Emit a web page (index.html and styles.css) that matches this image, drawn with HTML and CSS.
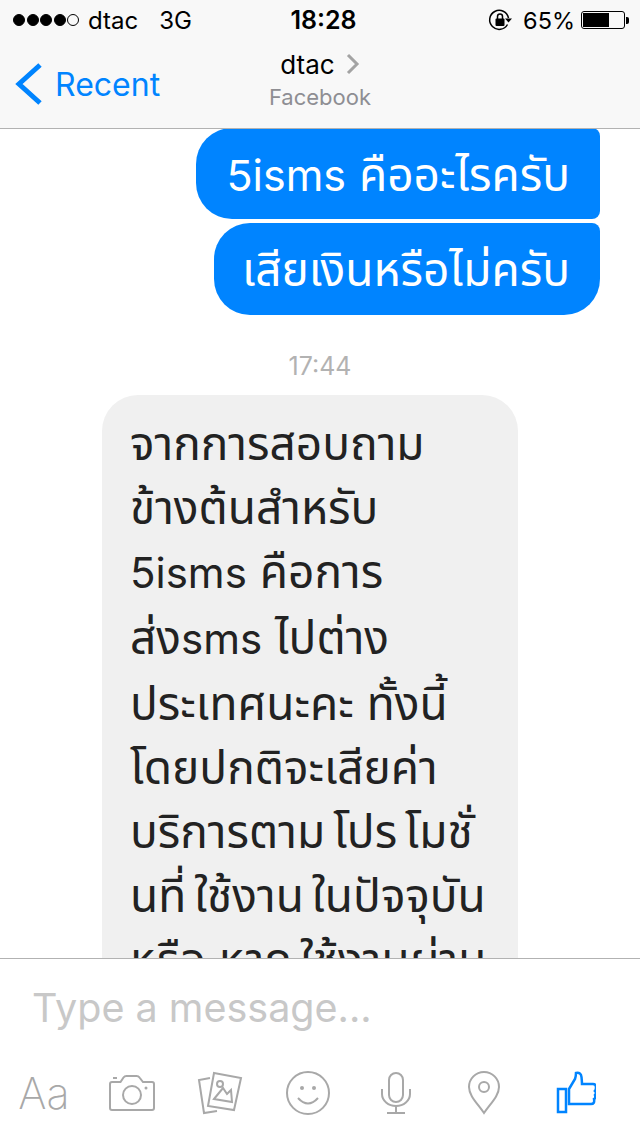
FILE: index.html
```html
<!DOCTYPE html>
<html lang="en">
<head>
    <meta charset="UTF-8">
    <meta name="viewport" content="width=device-width, initial-scale=1.0">
    <title>dtac - Messenger</title>
    <link rel="stylesheet" href="styles.css">
</head>
<body>
    <header class="topbar">
        <div class="status">
            <div class="status-left">
                <span class="signal">
                    <i class="dot"></i><i class="dot"></i><i class="dot"></i><i class="dot"></i><i class="dot empty"></i>
                </span>
                <span class="carrier">dtac</span>
                <span class="network">3G</span>
            </div>
            <div class="clock">18:28</div>
            <div class="status-right">
                <svg class="rotation-lock" width="24" height="24" viewBox="0 0 24 24">
                    <path d="M19.5 16.5A9.5 9.5 0 1 1 20.5 10" fill="none" stroke="#000" stroke-width="1.5"/>
                    <path d="M17 10.5h7l-3.5 4z" fill="#000"/>
                    <rect x="7.500" y="10.500" width="9" height="7.500" rx="1" fill="#000"/>
                    <path d="M9.5 11V8.5a2.5 2.5 0 0 1 5 0V11" fill="none" stroke="#000" stroke-width="1.5"/>
                </svg>
                <span class="percent">65%</span>
                <span class="battery"><span class="battery-level"></span></span>
                <span class="battery-tip"></span>
            </div>
        </div>
        <nav class="navbar">
            <a class="back">
                <svg width="30" height="44" viewBox="0 0 30 44">
                    <path d="M26 3L5 22l21 19" fill="none" stroke="#0084ff" stroke-width="5"/>
                </svg>
                <span>Recent</span>
            </a>
            <div class="title">
                <div class="title-name">
                    <span>dtac</span>
                    <svg width="14" height="22" viewBox="0 0 14 22">
                        <path d="M2 2l9 9-9 9" fill="none" stroke="#a3a3a3" stroke-width="3"/>
                    </svg>
                </div>
                <div class="title-sub">Facebook</div>
            </div>
            <div></div>
        </nav>
    </header>

    <main class="chat">
        <div class="bubble out first"><span class="latin">5isms</span> คืออะไรครับ</div>
        <div class="bubble out last">เสียเงินหรือไม่ครับ</div>
        <div class="time">17:44</div>
        <div class="bubble in">
            <div>จากการสอบถาม</div>
            <div>ข้างต้นสำหรับ</div>
            <div><span class="latin">5isms</span> คือการ</div>
            <div>ส่ง<span class="latin">sms</span> ไปต่าง</div>
            <div>ประเทศนะคะ ทั้งนี้</div>
            <div>โดยปกติจะเสียค่า</div>
            <div>บริการตาม<span class="lead">โปร</span><span class="lead">โมชั่</span></div>
            <div>นที่<span class="lead">ใช้งาน</span><span class="lead">ใน</span>ปัจจุบัน</div>
            <div>หรือ หาก<span class="lead">ใช้งานผ่าน</span></div>
        </div>
    </main>

    <footer class="composer">
        <div class="input">Type a message...</div>
        <div class="tools">
            <div class="tool text-tool">Aa</div>
            <div class="tool">
                <svg width="48" height="48" viewBox="0 0 48 48">
                    <path d="M4 13h8.500l3-4.500q1-1.500 3-1.500h10q2 0 3 1.500l3.500 4.500h9q2 0 2 2v24q0 2-2 2h-40q-2 0-2-2v-24q0-2 2-2z"/>
                    <circle cx="24" cy="26" r="9"/>
                    <circle class="solid" cx="38" cy="19" r="1.500"/>
                    <path d="M5 9h4"/>
                </svg>
            </div>
            <div class="tool">
                <svg width="48" height="48" viewBox="0 0 48 48">
                    <path d="M18 4l27 5-7 32-26-4z"/>
                    <path d="M14 9L3 11l5 33 13-2"/>
                    <circle cx="24" cy="15" r="3"/>
                    <path d="M18 30l9-11 4 6 4-4 1 12z"/>
                </svg>
            </div>
            <div class="tool">
                <svg width="48" height="48" viewBox="0 0 48 48">
                    <circle cx="24" cy="24" r="21"/>
                    <circle class="solid" cx="18" cy="19" r="2"/>
                    <circle class="solid" cx="30" cy="19" r="2"/>
                    <path d="M14 29q10 11 20 0"/>
                </svg>
            </div>
            <div class="tool">
                <svg width="48" height="48" viewBox="0 0 48 48">
                    <rect x="17" y="4" width="14" height="29" rx="7"/>
                    <path d="M10 20v5a14 12 0 0 0 28 0v-5"/>
                    <path d="M24 37v7M15 44h18"/>
                </svg>
            </div>
            <div class="tool">
                <svg width="48" height="48" viewBox="0 0 48 48">
                    <path d="M24 44C18 35 9 27 9 18a15 15 0 0 1 30 0c0 9-9 17-15 26z"/>
                    <circle cx="24" cy="18" r="5"/>
                </svg>
            </div>
            <div class="tool">
                <svg class="like" width="48" height="48" viewBox="0 0 48 48">
                    <rect x="10" y="20" width="8" height="23"/>
                    <path d="M21 20l6-10q1-3 1-6 5-1 5.500 4t.5 7h11q3 0 3 3t-1 4q2 2 0 4 1 3-1 4 1 5-3 5H21z"/>
                </svg>
            </div>
        </div>
    </footer>
</body>
</html>
```

FILE: styles.css
```css
html, body {
    margin: 0;
    padding: 0;
    height: 100%;
}
body {
    width: 640px;
    height: 1136px;
    overflow: hidden;
    display: flex;
    flex-direction: column;
    font-family: Inter, "Noto Sans", "Noto Sans Thai", sans-serif;
    background-color: #fff;
}
.topbar {
    background-color: #f8f8f8;
    border-bottom: 1px solid #b2b2b2;
    height: 128px;
    flex-shrink: 0;
}
.status {
    height: 40px;
    display: grid;
    grid-template-columns: 1fr auto 1fr;
    align-items: center;
    font-size: 24px;
    color: #000;
}
.status-left {
    display: flex;
    align-items: center;
    padding-left: 13px;
}
.signal {
    display: flex;
    gap: 1.5px;
    margin-right: 9px;
}
.dot {
    box-sizing: border-box;
    width: 12px;
    height: 12px;
    border: 1px solid #000;
    border-radius: 50%;
    background-color: #000;
}
.dot.empty {
    background-color: transparent;
}
.carrier {
    margin-right: 21px;
}
.clock {
    font-weight: 600;
    font-size: 25px;
    padding-left: 7px;
}
.status-right {
    display: flex;
    align-items: center;
    justify-content: flex-end;
    padding-right: 11px;
}
.rotation-lock {
    margin-right: 11px;
}
.percent {
    font-size: 23.5px;
    margin-right: 6px;
}
.battery {
    width: 40px;
    height: 14px;
    padding: 1px;
    border: 1px solid #000;
    border-radius: 3px;
    display: block;
}
.battery-level {
    display: block;
    width: 65%;
    height: 100%;
    background-color: #000;
}
.battery-tip {
    width: 3px;
    height: 7px;
    margin-left: 1px;
    background-color: #000;
    border-radius: 0 2px 2px 0;
}
.navbar {
    height: 88px;
    display: grid;
    grid-template-columns: 1fr auto 1fr;
}
.back {
    display: flex;
    align-items: center;
    padding-left: 14px;
    color: #0084ff;
    font-size: 32px;
    height: 88px;
}
.back svg {
    margin-right: 11px;
}
.title {
    text-align: center;
    padding-top: 7px;
}
.title-name {
    display: flex;
    align-items: center;
    justify-content: center;
    gap: 11px;
    font-size: 26px;
    height: 34px;
    color: #000;
}
.title-sub {
    font-size: 22px;
    color: #8e8e93;
    margin-top: 3px;
}
.chat {
    flex: 1;
    min-height: 0;
    overflow: hidden;
    display: flex;
    flex-direction: column;
    padding: 0 40px 0 102px;
    font-size: 46px;
    line-height: 64px;
}
.latin {
    font-size: 42px;
}
.lead {
    margin-left: 8px;
}
.bubble {
    flex-shrink: 0;
    box-sizing: border-box;
}
.bubble.out {
    align-self: flex-end;
    background-color: #0084ff;
    color: #fff;
    line-height: 93px;
    padding: 0 30px;
    white-space: nowrap;
}
.bubble.out .latin {
    font-size: 43px;
}
.bubble.first {
    height: 91px;
    border-radius: 36px 8px 8px 36px;
    margin-top: -1px;
}
.bubble.last {
    height: 92px;
    padding-left: 28px;
    border-radius: 36px 8px 36px 36px;
    margin-top: 4px;
}
.time {
    flex-shrink: 0;
    margin-left: -102px;
    margin-right: -40px;
    margin-top: 33px;
    text-align: center;
    font-size: 25px;
    line-height: 36px;
    color: #b2b2b2;
}
.bubble.in {
    align-self: flex-start;
    width: 416px;
    margin-top: 11px;
    padding: 16px 28px 32px;
    background-color: #f0f0f0;
    color: #222;
    border-radius: 36px;
    white-space: nowrap;
}
.composer {
    flex-shrink: 0;
    height: 177px;
    background-color: #fff;
    border-top: 1px solid #b2b2b2;
}
.input {
    height: 98px;
    line-height: 98px;
    margin-bottom: 4px;
    padding-left: 32px;
    font-size: 39.5px;
    color: #c8c8c8;
}
.tools {
    display: grid;
    grid-template-columns: repeat(7, 88px);
    height: 64px;
    align-items: center;
    justify-items: center;
}
.tool {
    display: flex;
    color: #a8a8a8;
}
.text-tool {
    font-size: 43px;
    font-weight: 200;
    line-height: 48px;
}
.tool svg {
    fill: none;
    stroke: #a8a8a8;
    stroke-width: 2;
}
.tool svg .solid {
    fill: #a8a8a8;
    stroke: none;
}
.tool svg.like {
    stroke: #0084ff;
    stroke-width: 2.5;
}
```
